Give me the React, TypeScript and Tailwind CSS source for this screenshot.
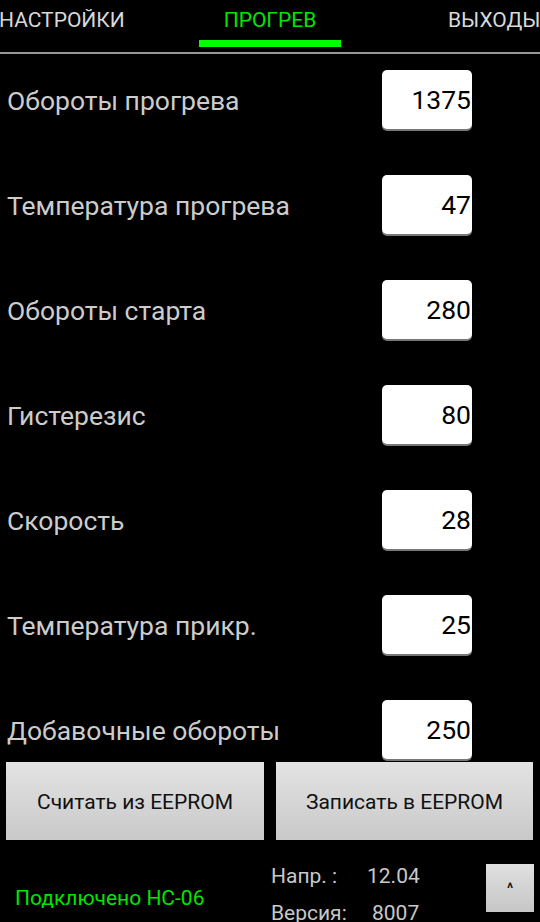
const rows = [
  { label: 'Обороты прогрева', value: '1375' },
  { label: 'Температура прогрева', value: '47' },
  { label: 'Обороты старта', value: '280' },
  { label: 'Гистерезис', value: '80' },
  { label: 'Скорость', value: '28' },
  { label: 'Температура прикр.', value: '25' },
  { label: 'Добавочные обороты', value: '250' },
];

export default function App() {
  return (
    <div
      className="w-[540px] h-[922px] bg-black overflow-hidden relative"
      style={{ fontFamily: 'Roboto, "Liberation Sans", sans-serif' }}
    >
      {/* tabs */}
      <div className="relative h-[52px]">
        <div className="absolute left-0 top-[7px] text-[21px] leading-[26px] text-[#d8d8d8] -ml-[1px] whitespace-nowrap">НАСТРОЙКИ</div>
        <div className="absolute left-[199px] w-[142px] top-[7px] text-center text-[21px] leading-[26px] text-[#00e600]">ПРОГРЕВ</div>
        <div className="absolute left-[448px] top-[7px] text-[21px] leading-[26px] text-[#d8d8d8] whitespace-nowrap">ВЫХОДЫ</div>
        <div className="absolute left-[199px] w-[142px] top-[40px] h-[7px] bg-[#00ff00]" />
      </div>
      <div className="h-[2px] bg-[#999999]" />

      {/* parameter list */}
      <div className="flex flex-col gap-[46px] pt-[16px]">
        {rows.map((r) => (
          <div key={r.label} className="flex items-center h-[59px]">
            <div className="flex-1 pl-[7px] text-[26.5px] text-[#cccccc] pt-[3px] whitespace-nowrap">{r.label}</div>
            <div className="w-[90px] h-[59px] mr-[68px] bg-white rounded-[5px] shadow-[0_2px_0_#777777] flex items-center justify-end pr-[1px] text-[26.5px] text-black">
              {r.value}
            </div>
          </div>
        ))}
      </div>

      {/* EEPROM buttons */}
      <div className="absolute left-0 top-[762px] w-[540px] flex gap-[12px] px-[6px]">
        <button className="w-[258px] h-[78px] bg-gradient-to-b from-[#e3e3e3] to-[#c9c9c9] text-[21px] text-[#111] pt-[4px]">
          Считать из EEPROM
        </button>
        <button className="w-[257px] h-[78px] bg-gradient-to-b from-[#e3e3e3] to-[#c9c9c9] text-[21px] text-[#111] pt-[4px]">
          Записать в EEPROM
        </button>
      </div>

      {/* footer */}
      <div className="absolute left-0 top-[855px] w-[540px] h-[67px] flex items-start">
        <div className="w-[271px] pl-[15px] pt-[29px] text-[21px] leading-[28px] text-[#00e600] whitespace-nowrap">Подключено НС-06</div>
        <div className="flex flex-col gap-[11px] text-[21px] text-[#c8c8c8] leading-[26px] pt-[8px]">
          <div className="flex">
            <span className="w-[96px]">Напр. :</span>
            <span>12.04</span>
          </div>
          <div className="flex">
            <span className="w-[101px]">Версия:</span>
            <span>8007</span>
          </div>
        </div>
        <button className="ml-auto mr-[6px] mt-[9px] w-[48px] h-[48px] bg-gradient-to-b from-[#e0e0e0] to-[#c6c6c6] text-[14px] font-bold text-[#111]">
          ^
        </button>
      </div>
    </div>
  );
}
